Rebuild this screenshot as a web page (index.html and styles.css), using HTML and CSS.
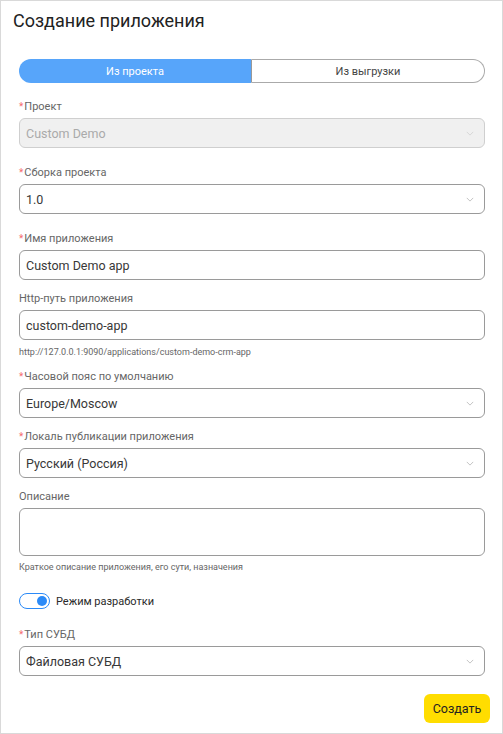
FILE: index.html
```html
<!DOCTYPE html>
<html lang="ru">
<head>
    <meta charset="UTF-8">
    <meta name="viewport" content="width=device-width, initial-scale=1.0">
    <title>Создание приложения</title>
    <link rel="stylesheet" href="styles.css">
</head>
<body>
    <div class="dialog">
        <h1 class="dialog-title">Создание приложения</h1>

        <form class="app-form">
            <!-- Source switch -->
            <div class="segmented">
                <button type="button" class="segment active">Из проекта</button>
                <button type="button" class="segment">Из выгрузки</button>
            </div>

            <div class="field">
                <label class="field-label required">Проект</label>
                <div class="select disabled">
                    <span>Custom Demo</span>
                    <svg class="chevron" viewBox="0 0 10 6"><path d="M1 1l4 4 4-4"/></svg>
                </div>
            </div>

            <div class="field">
                <label class="field-label required">Сборка проекта</label>
                <div class="select">
                    <span>1.0</span>
                    <svg class="chevron" viewBox="0 0 10 6"><path d="M1 1l4 4 4-4"/></svg>
                </div>
            </div>

            <div class="field field-tight">
                <label class="field-label required">Имя приложения</label>
                <input class="input" type="text" value="Custom Demo app">
            </div>

            <div class="field field-tight">
                <label class="field-label">Http-путь приложения</label>
                <input class="input" type="text" value="custom-demo-app">
                <div class="field-hint">http://127.0.0.1:9090/applications/custom-demo-crm-app</div>
            </div>

            <div class="field field-tight">
                <label class="field-label required">Часовой пояс по умолчанию</label>
                <div class="select">
                    <span>Europe/Moscow</span>
                    <svg class="chevron" viewBox="0 0 10 6"><path d="M1 1l4 4 4-4"/></svg>
                </div>
            </div>

            <div class="field field-tight">
                <label class="field-label required">Локаль публикации приложения</label>
                <div class="select">
                    <span>Русский (Россия)</span>
                    <svg class="chevron" viewBox="0 0 10 6"><path d="M1 1l4 4 4-4"/></svg>
                </div>
            </div>

            <div class="field">
                <label class="field-label">Описание</label>
                <textarea class="textarea"></textarea>
                <div class="field-hint">Краткое описание приложения, его сути, назначения</div>
            </div>

            <label class="switch-row">
                <span class="switch on"><span class="switch-knob"></span></span>
                <span>Режим разработки</span>
            </label>

            <div class="field">
                <label class="field-label required">Тип СУБД</label>
                <div class="select">
                    <span>Файловая СУБД</span>
                    <svg class="chevron" viewBox="0 0 10 6"><path d="M1 1l4 4 4-4"/></svg>
                </div>
            </div>
        </form>

        <div class="dialog-footer">
            <button type="button" class="btn-primary">Создать</button>
        </div>
    </div>
</body>
</html>
```

FILE: styles.css
```css
body {
    margin: 0;
    padding: 0;
    font-family: Roboto, "Liberation Sans", Arial, sans-serif;
    background: #fff;
    color: #333;
}

.dialog {
    box-sizing: border-box;
    width: 503px;
    height: 734px;
    border: 1px solid #d9d9d9;
}

.dialog-title {
    margin: 0;
    padding: 8px 12px 0;
    font-size: 18px;
    font-weight: 400;
    line-height: 24px;
    color: #222;
}

.app-form {
    padding: 26px 17px 0 18px;
}

/* Segmented switch */
.segmented {
    display: flex;
    height: 24px;
    margin-bottom: 16px;
}

.segment {
    flex: 1 1 0;
    box-sizing: border-box;
    margin: 0;
    padding: 0;
    font-family: inherit;
    font-size: 11px;
    font-weight: 400;
    color: #444;
    background: #fff;
    border: 1px solid #aaa;
    border-left-color: #999;
    border-radius: 0 12px 12px 0;
}

.segment.active {
    color: #fff;
    background: #57a5fa;
    border: none;
    border-radius: 12px 0 0 12px;
}

/* Fields */
.field {
    margin-bottom: 17px;
}

.field-tight {
    margin-bottom: 11px;
}

.field-label {
    display: block;
    margin-bottom: 3px;
    font-size: 11px;
    line-height: 16px;
    color: #666;
}

.field-label.required::before {
    content: "*";
    color: #f56c6c;
    font-size: 10px;
    line-height: 0;
    margin-right: 1px;
}

.select, .input {
    box-sizing: border-box;
    display: flex;
    align-items: center;
    width: 100%;
    height: 30px;
    padding: 0 10px 0 6px;
    font-family: inherit;
    font-size: 12.5px;
    color: #383838;
    background: #fff;
    border: 1px solid #9a9a9a;
    border-radius: 6px;
}

.select span {
    flex: 1;
}

.select.disabled {
    color: #aaa;
    background: #f0f0f0;
    border-color: #cfcfcf;
}

.chevron {
    width: 8px;
    height: 5px;
    fill: none;
    stroke: #b5b5b5;
    stroke-width: 1;
}

.select.disabled .chevron {
    stroke: #d0d0d0;
}

.textarea {
    box-sizing: border-box;
    display: block;
    width: 100%;
    height: 48px;
    resize: none;
    font-family: inherit;
    border: 1px solid #9a9a9a;
    border-radius: 6px;
}

.field-hint {
    margin-top: 6px;
    font-size: 9px;
    line-height: 12px;
    color: #666;
}

.field:has(.textarea) {
    margin-bottom: 18px;
}

.field:has(.textarea) .field-hint {
    margin-top: 5px;
}

/* Switch */
.switch-row {
    display: flex;
    align-items: center;
    gap: 6px;
    height: 20px;
    margin-bottom: 16px;
    font-size: 11px;
    color: #2a2a2a;
}

.switch {
    box-sizing: border-box;
    display: flex;
    align-items: center;
    justify-content: flex-end;
    width: 31px;
    height: 16px;
    padding: 0 2px;
    border: 1px solid #2b8af7;
    border-radius: 8px;
}

.switch-knob {
    width: 10px;
    height: 10px;
    border-radius: 50%;
    background: #2b8af7;
}

/* Footer */
.dialog-footer {
    display: flex;
    justify-content: flex-end;
    padding: 0 12px 0 0;
    margin-top: 18px;
}

.btn-primary {
    width: 66px;
    height: 29px;
    font-family: inherit;
    font-size: 12.5px;
    color: #222;
    background: #ffdd00;
    border: none;
    border-radius: 6px;
}
```
